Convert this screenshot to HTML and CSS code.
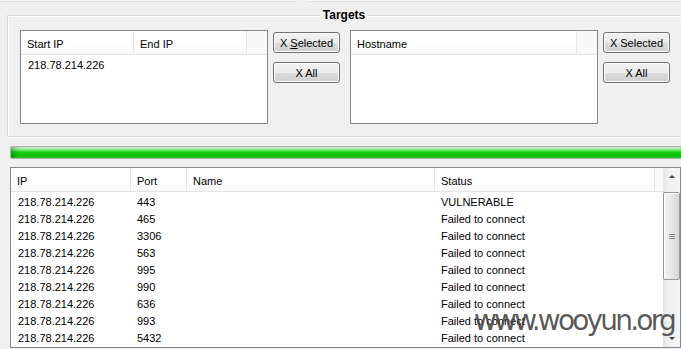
FILE: index.html
```html
<!DOCTYPE html>
<html lang="en">
<head>
    <meta charset="UTF-8">
    <title>Scanner - Targets</title>
    <link rel="stylesheet" href="styles.css">
</head>
<body>
    <!-- bottom edges of the panels above -->
    <div class="top-strip">
        <div class="strip-left"></div>
        <div class="strip-right"></div>
    </div>

    <!-- Targets group -->
    <div class="group">
        <div class="group-title"><span>Targets</span></div>
        <div class="targets-row">
            <div class="listview">
                <div class="lv-head">
                    <div class="col c-start">Start IP</div>
                    <div class="col c-end">End IP</div>
                    <div class="col c-fill"></div>
                </div>
                <div class="lv-body">
                    <div class="lv-row"><div class="col c-start">218.78.214.226</div></div>
                </div>
            </div>
            <div class="btn-col">
                <button class="btn">X <u>S</u>elected</button>
                <button class="btn">X All</button>
            </div>

            <div class="listview list-right">
                <div class="lv-head">
                    <div class="col c-host">Hostname</div>
                    <div class="col c-fill"></div>
                </div>
                <div class="lv-body"></div>
            </div>
            <div class="btn-col">
                <button class="btn">X Selected</button>
                <button class="btn">X All</button>
            </div>
        </div>
    </div>

    <!-- progress -->
    <div class="progress"><div class="progress-fill"></div></div>

    <!-- results -->
    <div class="results">
        <div class="results-main">
            <div class="lv-head">
                <div class="col c-ip">IP</div>
                <div class="col c-port">Port</div>
                <div class="col c-name">Name</div>
                <div class="col c-status">Status</div>
                <div class="col c-rest"></div>
            </div>
            <div class="results-body" id="resultRows"></div>
        </div>
        <div class="scrollbar">
            <div class="sb-btn sb-up"><span class="arrow-up"></span></div>
            <div class="sb-thumb"><span class="grip"></span></div>
            <div class="sb-btn sb-down"><span class="arrow-down"></span></div>
        </div>
    </div>

    <div class="watermark">www.wooyun.org</div>

    <script>
        const results = [
            ['443', 'VULNERABLE'],
            ['465', 'Failed to connect'],
            ['3306', 'Failed to connect'],
            ['563', 'Failed to connect'],
            ['995', 'Failed to connect'],
            ['990', 'Failed to connect'],
            ['636', 'Failed to connect'],
            ['993', 'Failed to connect'],
            ['5432', 'Failed to connect']
        ];
        document.getElementById('resultRows').innerHTML = results.map(r => `
            <div class="lv-row">
                <div class="col c-ip">218.78.214.226</div>
                <div class="col c-port">${r[0]}</div>
                <div class="col c-name"></div>
                <div class="col c-status">${r[1]}</div>
            </div>
        `).join('');
    </script>
</body>
</html>
```

FILE: styles.css
```css
body {
    margin: 0;
    width: 681px;
    height: 349px;
    overflow: hidden;
    background-color: #f0f0f0;
    font-family: "Liberation Sans", Arial, sans-serif;
    font-size: 11px;
    color: #000;
    position: relative;
}
.top-strip {
    display: flex;
    height: 3px;
}
.strip-left, .strip-right {
    height: 1px;
    border-bottom: 1px solid #dce3ea;
    background-color: #f7f7f7;
}
.strip-left {
    width: 297px;
}
.strip-right {
    flex: 1;
    margin-left: 11px;
}

/* group box */
.group {
    margin: 12px -4px 0 7px;
    height: 122px;
    box-sizing: border-box;
    border: 1px solid #d5d9de;
    box-shadow: inset 1px 1px 0 #fff, 0 1px 0 #fff;
}
.group-title {
    height: 14px;
    margin-top: -8px;
    line-height: 14px;
    text-align: center;
    padding-right: 4px;
}
.group-title span {
    background-color: #f0f0f0;
    padding: 0 3px;
    font-weight: bold;
    font-size: 12px;
}
.targets-row {
    display: flex;
    align-items: flex-start;
    margin-top: 8px;
    padding-left: 12px;
}

/* list views */
.listview {
    width: 248px;
    height: 94px;
    box-sizing: border-box;
    border: 1px solid #828790;
    background-color: #fff;
}
.list-right {
    margin-left: 10px;
}
.lv-head {
    display: flex;
    height: 24px;
    box-sizing: border-box;
    border-bottom: 1px solid #e5e5e5;
    background: linear-gradient(#fff, #fff 60%, #f7f8f9);
}
.lv-head .col {
    box-sizing: border-box;
    border-right: 1px solid #e5e5e5;
    padding: 2px 0 0 6px;
    line-height: 22px;
    white-space: nowrap;
}
.lv-head .c-fill, .lv-head .c-rest {
    border-right: none;
    background-color: #f9f9f9;
}
.lv-body {
    padding-top: 2px;
}
.lv-row {
    display: flex;
    height: 17px;
    line-height: 17px;
}
.lv-row .col {
    box-sizing: border-box;
    padding-left: 6px;
    white-space: nowrap;
}
.lv-row .c-ip, .lv-row .c-start {
    padding-left: 7px;
}
.c-start, .c-end {
    width: 113px;
}
.c-fill {
    flex: 1;
}
.c-host {
    width: 226px;
}

/* buttons */
.btn-col {
    display: flex;
    flex-direction: column;
    gap: 9px;
    margin: 2px 0 0 5px;
}
.btn {
    width: 67px;
    height: 21px;
    padding: 0;
    border: 1px solid #707070;
    border-radius: 3px;
    background: linear-gradient(#f2f2f2, #ebebeb 50%, #dddddd 51%, #cfcfcf);
    box-shadow: inset 0 0 0 1px #fcfcfc;
    font-family: "Liberation Sans", Arial, sans-serif;
    font-size: 11px;
    color: #000;
}

/* progress */
.progress {
    margin: 9px -4px 0 10px;
    height: 13px;
    box-sizing: border-box;
    border: 1px solid #b2b2b2;
    border-radius: 2px;
    background-color: #e6e6e6;
}
.progress-fill {
    height: 100%;
    background: linear-gradient(#d8f7d8, #8ae98a 25%, #1ad21a 45%, #06c206 75%, #2bc92b);
    box-shadow: inset 6px 0 6px -3px rgba(0, 80, 0, 0.45);
}

/* results list */
.results {
    display: flex;
    margin: 8px 0 0 10px;
    width: 671px;
    height: 181px;
    box-sizing: border-box;
    border: 1px solid #828790;
    background-color: #fff;
    overflow: hidden;
}
.results-main {
    flex: 1;
}
.results-body {
    padding-top: 2px;
}
.c-ip {
    width: 120px;
}
.c-port {
    width: 56px;
}
.c-name {
    width: 248px;
}
.c-status {
    width: 220px;
}
.c-rest {
    flex: 1;
}

/* scrollbar */
.scrollbar {
    width: 17px;
    display: flex;
    flex-direction: column;
    background: linear-gradient(to right, #e3e3e3, #f1f1f1 30%, #f4f4f4);
}
.sb-btn {
    height: 17px;
    display: flex;
    align-items: center;
    justify-content: center;
}
.sb-down {
    margin-top: auto;
}
.arrow-up {
    width: 0;
    height: 0;
    border-left: 3px solid transparent;
    border-right: 3px solid transparent;
    border-bottom: 3px solid #404040;
}
.arrow-down {
    width: 0;
    height: 0;
    border-left: 3px solid transparent;
    border-right: 3px solid transparent;
    border-top: 3px solid #404040;
}
.sb-thumb {
    margin: 7px 0 0 0;
    height: 88px;
    box-sizing: border-box;
    border: 1px solid #979797;
    border-radius: 2px;
    background: linear-gradient(to right, #f3f3f3, #e8e8e8 50%, #d6d6d6);
    box-shadow: inset 1px 1px 0 #fff;
    display: flex;
    align-items: center;
    justify-content: center;
}
.grip {
    width: 6px;
    height: 5px;
    background: repeating-linear-gradient(#8a8a8a 0 1px, transparent 1px 2px);
}

/* watermark */
.watermark {
    position: absolute;
    left: 474px;
    top: 304px;
    font-family: "DejaVu Sans", Verdana, sans-serif;
    font-size: 28px;
    letter-spacing: -2.8px;
    color: rgba(60, 60, 60, 0.85);
    white-space: nowrap;
}
```
